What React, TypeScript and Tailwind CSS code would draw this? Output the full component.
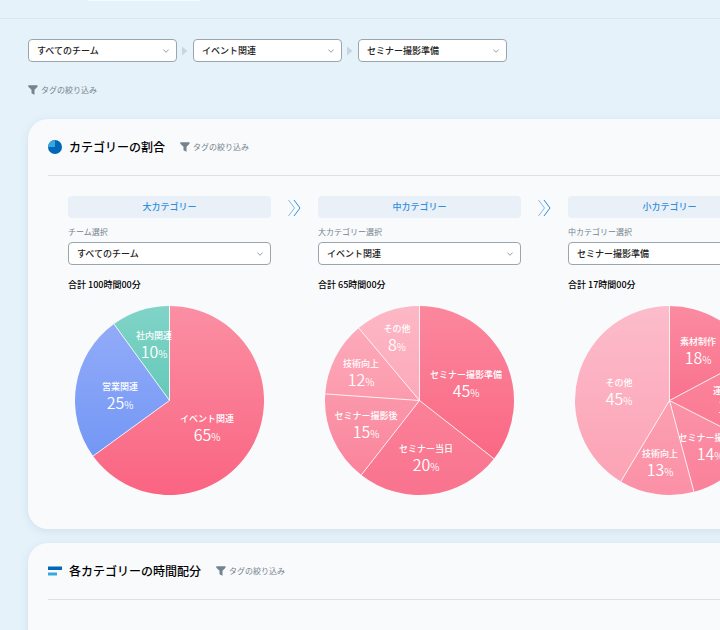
import React, { useId } from "react";

type Slice = {
  name: string;
  value: number;
  sweep: number; // degrees
  x: number;
  y: number;
  from: string;
  to: string;
};

type Column = {
  title: string;
  label: string;
  options: string[];
  total: string;
  slices: Slice[];
};

const teams = ["すべてのチーム"];
const events = ["イベント関連", "営業関連", "社内関連"];
const tasks = ["セミナー撮影準備", "セミナー当日", "セミナー撮影後", "技術向上", "その他"];

const columns: Column[] = [
  {
    title: "大カテゴリー",
    label: "チーム選択",
    options: teams,
    total: "合計 100時間00分",
    slices: [
      { name: "イベント関連", value: 65, sweep: 234, x: 132, y: 116, from: "#fb8fa3", to: "#fa6482" },
      { name: "営業関連", value: 25, sweep: 90, x: 45, y: 84, from: "#92abf8", to: "#7397f5" },
      { name: "社内関連", value: 10, sweep: 36, x: 79, y: 33, from: "#80d4c7", to: "#65c9b9" },
    ],
  },
  {
    title: "中カテゴリー",
    label: "大カテゴリー選択",
    options: events,
    total: "合計 65時間00分",
    slices: [
      { name: "セミナー撮影準備", value: 45, sweep: 128, x: 141, y: 72, from: "#fb879d", to: "#fa6884" },
      { name: "セミナー当日", value: 20, sweep: 90, x: 101, y: 146, from: "#fb8198", to: "#f9738e" },
      { name: "セミナー撮影後", value: 15, sweep: 56, x: 41, y: 113, from: "#fb98ab", to: "#fa839b" },
      { name: "技術向上", value: 12, sweep: 46, x: 36, y: 61, from: "#fcaaba", to: "#fc9aad" },
      { name: "その他", value: 8, sweep: 40, x: 72, y: 26, from: "#fdb7c5", to: "#fca9ba" },
    ],
  },
  {
    title: "小カテゴリー",
    label: "中カテゴリー選択",
    options: tasks,
    total: "合計 17時間00分",
    slices: [
      { name: "素材制作", value: 18, sweep: 62, x: 123, y: 39, from: "#fb8ba1", to: "#f9728d" },
      { name: "運営関連", value: 10, sweep: 55, x: 156, y: 88, from: "#fa869d", to: "#fa7891" },
      { name: "セミナー撮影後", value: 14, sweep: 48, x: 135, y: 135, from: "#fb93a8", to: "#fa819a" },
      { name: "技術向上", value: 13, sweep: 46, x: 85, y: 151, from: "#fca0b2", to: "#fb90a6" },
      { name: "その他", value: 45, sweep: 149, x: 44, y: 80, from: "#fcbccb", to: "#fca3b5" },
    ],
  },
];

const CENTER = 94.5;
const RADIUS = 94.5;

function point(deg: number) {
  const rad = (deg * Math.PI) / 180;
  return `${CENTER + RADIUS * Math.sin(rad)} ${CENTER - RADIUS * Math.cos(rad)}`;
}

function PieChart({ slices }: { slices: Slice[] }) {
  const id = useId();
  let angle = 0;
  const arcs = slices.map((slice) => {
    const start = angle;
    angle += slice.sweep;
    const large = slice.sweep > 180 ? 1 : 0;
    return {
      start,
      d: `M${CENTER} ${CENTER}L${point(start)}A${RADIUS} ${RADIUS} 0 ${large} 1 ${point(angle)}Z`,
    };
  });

  return (
    <svg viewBox="0 0 190 190" className="mx-auto mt-[15px] block w-[190px]">
      <defs>
        {slices.map((slice, i) => (
          <linearGradient key={i} id={`${id}-${i}`} x1="0" y1="0" x2="0" y2="1">
            <stop offset="0" stopColor={slice.from} />
            <stop offset="1" stopColor={slice.to} />
          </linearGradient>
        ))}
      </defs>
      {arcs.map((arc, i) => (
        <path key={i} d={arc.d} fill={`url(#${id}-${i})`} />
      ))}
      {arcs.map((arc, i) => (
        <path key={i} d={`M${CENTER} ${CENTER}L${point(arc.start)}`} stroke="#fff" strokeOpacity="0.8" />
      ))}
      {slices.map((slice) => (
        <g key={slice.name} fill="#fff" textAnchor="middle">
          <text x={slice.x} y={slice.y} className="text-[9px] font-medium">
            {slice.name}
          </text>
          <text x={slice.x} y={slice.y + 19} className="text-[16px] font-[350]">
            {slice.value}
            <tspan className="text-[10px]">%</tspan>
          </text>
        </g>
      ))}
    </svg>
  );
}

function FilterButton() {
  return (
    <button type="button" className="flex items-center gap-[3px] text-[8px] leading-3 text-[#74838d]">
      <svg viewBox="0 0 10 10" className="size-[10px]" fill="currentColor">
        <path d="M.3.3h9.200v1.500L6.500 4.700v5L3.500 8.300V4.700L.3 1.800z" />
      </svg>
      タグの絞り込み
    </button>
  );
}

function SelectBox({ id, label, options }: { id?: string; label?: string; options: string[] }) {
  return (
    <div className="relative">
      <select
        id={id}
        aria-label={label}
        className="block h-[23px] w-full appearance-none rounded-[4px] border border-[#9aa6af] bg-white px-2 text-[9px] leading-[21px] font-medium text-[#222]"
      >
        {options.map((option) => (
          <option key={option}>{option}</option>
        ))}
      </select>
      <svg
        viewBox="0 0 6 4"
        className="pointer-events-none absolute top-[10px] right-2 w-[6px]"
        fill="none"
        stroke="#8497a3"
        strokeWidth="0.9"
      >
        <path d="M.3.5 3 3.3 5.7.5" />
      </svg>
    </div>
  );
}

function Card({ icon, title, children }: { icon: React.ReactNode; title: string; children?: React.ReactNode }) {
  return (
    <section className="rounded-[20px] bg-[#f9fafc] px-5 pt-5 pb-[33px] shadow-[0_2px_8px_rgba(90,130,160,0.15)]">
      <header className="flex items-center border-b border-[#dde1e4] pb-5">
        {icon}
        <h2 className="mr-[15px] ml-[7px] text-[12px] leading-4 font-medium text-black">{title}</h2>
        <FilterButton />
      </header>
      {children}
    </section>
  );
}

function StepArrow() {
  return (
    <svg viewBox="0 0 13 18" className="mt-[3px] w-[13px] shrink-0" fill="none" stroke="#2d8fdd">
      <path d="M.5 1l6 8-6 8" strokeOpacity="0.6" />
      <path d="M6 1l6 8-6 8" />
    </svg>
  );
}

function NextMark() {
  return (
    <svg viewBox="0 0 16 10" className="w-4" fill="#c9d6e0">
      <path d="M5 .5 10.500 5 5 9.500z" />
    </svg>
  );
}

export default function App() {
  return (
    <div className="h-screen overflow-hidden bg-[#e5f2fa] font-['Noto_Sans_CJK_JP',sans-serif]" lang="ja">
      <div className="h-[19px] border-b border-[#d8e6ee]">
        <div className="ml-[88px] h-px w-28 bg-[#f5fafd]" />
      </div>

      <main className="min-w-[840px] px-7 pt-5">
        <div className="flex items-center">
          {[teams, events, tasks].map((options, i) => (
            <React.Fragment key={i}>
              {i > 0 && <NextMark />}
              <div className="w-[149px]">
                <SelectBox label={["チーム", "大カテゴリー", "中カテゴリー"][i]} options={options} />
              </div>
            </React.Fragment>
          ))}
        </div>

        <div className="mt-[22px] mb-[23px]">
          <FilterButton />
        </div>

        <div className="flex flex-col gap-[14px]">
          <Card
            title="カテゴリーの割合"
            icon={
              <svg viewBox="0 0 14 14" className="w-[14px]">
                <circle cx="7" cy="7" r="7" fill="#0068b7" />
                <path d="M7 7H0a7 7 0 0 1 7-7z" fill="#37a8dd" />
              </svg>
            }
          >
            <div className="flex items-start gap-[17px] px-5 pt-5">
              {columns.map((column, i) => (
                <React.Fragment key={column.title}>
                  {i > 0 && <StepArrow />}
                  <div className="w-[203px] shrink-0">
                    <h3 className="rounded-[4px] bg-[#eaf0f7] text-center text-[9px] leading-[22px] font-medium text-[#2d8fdd]">
                      {column.title}
                    </h3>
                    <label htmlFor={`category-${i}`} className="mt-2 mb-1 block text-[8px] leading-3 text-[#74838d]">
                      {column.label}
                    </label>
                    <SelectBox id={`category-${i}`} options={column.options} />
                    <p className="mt-[14px] text-[9px] leading-3 font-medium text-black">{column.total}</p>
                    <PieChart slices={column.slices} />
                  </div>
                </React.Fragment>
              ))}
            </div>
          </Card>

          <Card
            title="各カテゴリーの時間配分"
            icon={
              <svg viewBox="0 0 14 14" className="w-[14px]">
                <path d="M0 2.500h14v3.500H0z" fill="#0068b7" />
                <path d="M0 8.500h9v3H0z" fill="#37a8dd" />
              </svg>
            }
          >
            <div className="h-[300px]" />
          </Card>
        </div>
      </main>
    </div>
  );
}
